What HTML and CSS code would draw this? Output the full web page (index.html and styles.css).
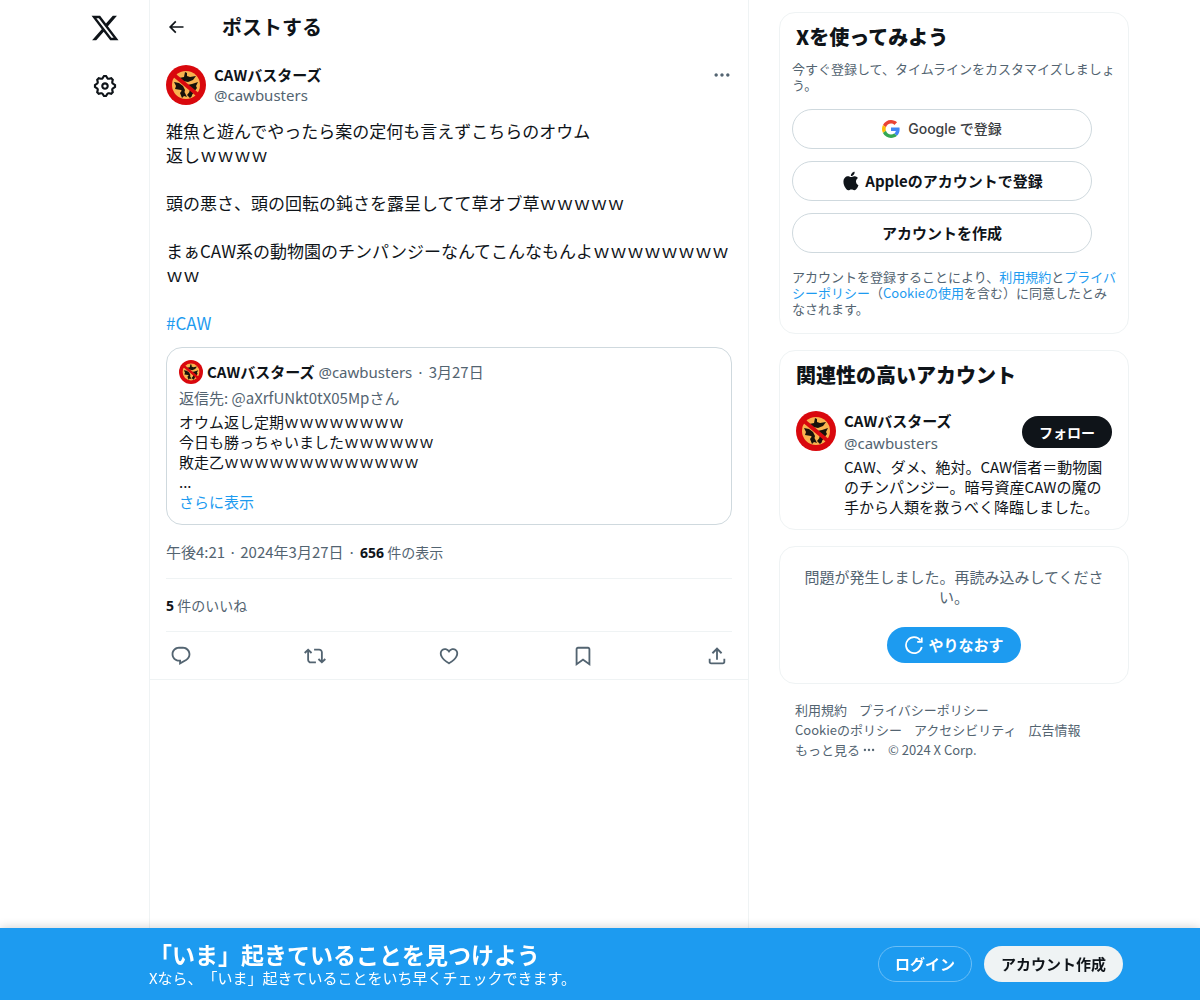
FILE: index.html
```html
<!DOCTYPE html>
<html lang="ja">
<head>
    <meta charset="UTF-8">
    <meta name="viewport" content="width=device-width, initial-scale=1.0">
    <title>XユーザーのCAWバスターズさん</title>
    <link rel="stylesheet" href="styles.css">
</head>
<body>
    <!-- shared avatar artwork -->
    <svg class="sprite" aria-hidden="true">
        <symbol id="avatar" viewBox="0 0 40 40">
            <circle cx="20" cy="20" r="20" fill="#d9080d"/>
            <circle cx="20" cy="20" r="14" fill="#f9b34f"/>
            <path fill="#17120b" d="M19 7l2 1v3l3 1 6-1-3 4-5 2-5-1-4-3 5-1zM8 17l5 1 4 3 2 4-1 4-3-4-6-1 1-3zM32 17l-2 4 1 2-3 4-2 3-3-2 1-4-3-4 5-1zM17 24l2 4 2 4-3-1-2 2-2-5zM25 25l1 6-2 2-3-3z"/>
            <path stroke="#d9080d" stroke-width="4" d="M8 10l24 20"/>
        </symbol>
    </svg>

    <div class="layout">
        <header class="sidebar">
            <a href="#" class="logo" aria-label="X">
                <svg viewBox="0 0 24 24"><path d="M18.244 2.25h3.308l-7.227 8.26 8.502 11.24H16.17l-5.214-6.817L4.99 21.75H1.68l7.73-8.835L1.254 2.25H8.08l4.713 6.231zm-1.161 17.52h1.833L7.084 4.126H5.117z"/></svg>
            </a>
            <a href="#" class="settings" aria-label="設定">
                <svg viewBox="0 0 24 24"><path d="M10.54 1.75h2.92l1.57 2.36c.11.17.32.25.53.21l2.53-.59 2.17 2.17-.58 2.54c-.05.2.04.41.21.53l2.36 1.57v2.92l-2.36 1.57c-.17.12-.26.33-.21.53l.58 2.54-2.17 2.17-2.53-.59c-.21-.04-.42.04-.53.21l-1.57 2.36h-2.92l-1.58-2.36c-.11-.17-.32-.25-.52-.21l-2.54.59-2.17-2.17.58-2.54c.05-.2-.03-.41-.21-.53l-2.35-1.57v-2.92L4.1 8.97c.18-.12.26-.33.21-.53L3.73 5.9 5.9 3.73l2.54.59c.2.04.41-.04.52-.21l1.58-2.36zm1.07 2l-.98 1.47C10.05 6.08 9 6.5 7.99 6.27l-1.46-.34-.6.6.33 1.46c.24 1.01-.18 2.07-1.05 2.64l-1.46.98v.78l1.46.98c.87.57 1.29 1.63 1.05 2.64l-.33 1.46.6.6 1.46-.34c1.01-.23 2.06.19 2.64 1.05l.98 1.47h.78l.97-1.47c.58-.86 1.63-1.28 2.65-1.05l1.45.34.61-.6-.34-1.46c-.23-1.01.18-2.07 1.05-2.64l1.47-.98v-.78l-1.47-.98c-.87-.57-1.28-1.63-1.05-2.64l.34-1.46-.61-.6-1.45.34c-1.02.23-2.07-.19-2.65-1.05l-.97-1.47h-.78zM12 10.5c-.83 0-1.5.67-1.5 1.5s.67 1.5 1.5 1.5c.82 0 1.5-.67 1.5-1.5s-.68-1.5-1.5-1.5zM8.5 12c0-1.93 1.56-3.5 3.5-3.5 1.93 0 3.5 1.57 3.5 3.5s-1.57 3.5-3.5 3.5c-1.94 0-3.5-1.57-3.5-3.5z"/></svg>
            </a>
        </header>

        <main class="main">
            <div class="topbar">
                <button class="icon-btn back" aria-label="戻る">
                    <svg viewBox="0 0 24 24"><path d="M7.414 13l5.043 5.04-1.414 1.42L3.586 12l7.457-7.46 1.414 1.42L7.414 11H21v2H7.414z"/></svg>
                </button>
                <h1>ポストする</h1>
            </div>

            <article class="post">
                <div class="author">
                    <svg class="avatar"><use href="#avatar"/></svg>
                    <div class="author-names">
                        <a href="#" class="name">CAWバスターズ</a>
                        <a href="#" class="handle">@cawbusters</a>
                    </div>
                    <button class="icon-btn more" aria-label="もっと見る">
                        <svg viewBox="0 0 24 24"><path d="M3 12c0-1.1.9-2 2-2s2 .9 2 2-.9 2-2 2-2-.9-2-2zm9 2c1.1 0 2-.9 2-2s-.9-2-2-2-2 .9-2 2 .9 2 2 2zm7 0c1.1 0 2-.9 2-2s-.9-2-2-2-2 .9-2 2 .9 2 2 2z"/></svg>
                    </button>
                </div>

                <div class="post-text">雑魚と遊んでやったら案の定何も言えずこちらのオウム<br>返しｗｗｗｗ<br><br>頭の悪さ、頭の回転の鈍さを露呈してて草オブ草ｗｗｗｗｗ<br><br>まぁCAW系の動物園のチンパンジーなんてこんなもんよｗｗｗｗｗｗｗｗｗｗ<br><br><a href="#">#CAW</a></div>

                <div class="quote">
                    <div class="quote-head">
                        <svg class="avatar-small"><use href="#avatar"/></svg>
                        <span class="name">CAWバスターズ</span>
                        <span class="handle">@cawbusters</span>
                        <span class="date"><span class="dot">·</span>3月27日</span>
                    </div>
                    <div class="reply-to">返信先: @aXrfUNkt0tX05Mpさん</div>
                    <div class="quote-text">オウム返し定期ｗｗｗｗｗｗｗｗ<br>今日も勝っちゃいましたｗｗｗｗｗｗ<br>敗走乙ｗｗｗｗｗｗｗｗｗｗｗｗｗ<br>...</div>
                    <a href="#">さらに表示</a>
                </div>

                <div class="meta">
                    <a href="#">午後4:21 · 2024年3月27日</a><span class="dot">·</span><span class="count"><b>656</b> 件の表示</span>
                </div>
                <div class="likes count"><b>5</b> 件のいいね</div>

                <div class="actions">
                    <button aria-label="返信">
                        <svg viewBox="0 0 24 24"><path d="M1.751 10c0-4.42 3.584-8 8.005-8h4.366c4.49 0 8.129 3.64 8.129 8.13 0 2.96-1.607 5.68-4.196 7.11l-8.054 4.46v-3.69h-.067c-4.49.1-8.183-3.51-8.183-8.01zm8.005-6c-3.317 0-6.005 2.69-6.005 6 0 3.37 2.77 6.08 6.138 6.01l.351-.01h1.761v2.3l5.087-2.81c1.951-1.08 3.163-3.13 3.163-5.36 0-3.39-2.744-6.13-6.129-6.13H9.756z"/></svg>
                    </button>
                    <button aria-label="リポスト">
                        <svg viewBox="0 0 24 24"><path d="M4.5 3.88l4.432 4.14-1.364 1.46L5.5 7.55V16c0 1.1.896 2 2 2H13v2H7.5c-2.209 0-4-1.79-4-4V7.55L1.432 9.48.068 8.02 4.5 3.88zM16.5 6H11V4h5.5c2.209 0 4 1.79 4 4v8.45l2.068-1.93 1.364 1.46-4.432 4.14-4.432-4.14 1.364-1.46 2.068 1.93V8c0-1.1-.896-2-2-2z"/></svg>
                    </button>
                    <button aria-label="いいね">
                        <svg viewBox="0 0 24 24"><path d="M16.697 5.5c-1.222-.06-2.679.51-3.89 2.16l-.805 1.09-.806-1.09C9.984 6.01 8.526 5.44 7.304 5.5c-1.243.07-2.349.78-2.91 1.91-.552 1.12-.633 2.78.479 4.82 1.074 1.97 3.257 4.27 7.129 6.61 3.87-2.34 6.052-4.64 7.126-6.61 1.111-2.04 1.03-3.7.477-4.82-.561-1.13-1.666-1.84-2.908-1.91zm4.187 7.69c-1.351 2.48-4.001 5.12-8.379 7.67l-.503.3-.504-.3c-4.379-2.55-7.029-5.19-8.382-7.67-1.36-2.5-1.41-4.86-.514-6.67.887-1.79 2.647-2.91 4.601-3.01 1.651-.09 3.368.56 4.798 2.01 1.429-1.45 3.146-2.1 4.796-2.01 1.954.1 3.714 1.22 4.601 3.01.896 1.81.846 4.17-.514 6.67z"/></svg>
                    </button>
                    <button aria-label="ブックマーク">
                        <svg viewBox="0 0 24 24"><path d="M4 4.5C4 3.12 5.119 2 6.5 2h11C18.881 2 20 3.12 20 4.5v18.44l-8-5.71-8 5.71V4.5zM6.5 4c-.276 0-.5.22-.5.5v14.56l6-4.29 6 4.29V4.5c0-.28-.224-.5-.5-.5h-11z"/></svg>
                    </button>
                    <button aria-label="共有">
                        <svg viewBox="0 0 24 24"><path d="M12 2.59l5.7 5.7-1.41 1.42L13 6.41V16h-2V6.41l-3.3 3.3-1.41-1.42L12 2.59zM21 15l-.02 3.51c0 1.38-1.12 2.49-2.5 2.49H5.5C4.11 21 3 19.88 3 18.5V15h2v3.5c0 .28.22.5.5.5h12.98c.28 0 .5-.22.5-.5L19 15h2z"/></svg>
                    </button>
                </div>
            </article>
        </main>

        <aside class="side">
            <section class="card signup">
                <h2>Xを使ってみよう</h2>
                <p>今すぐ登録して、タイムラインをカスタマイズしましょう。</p>
                <div class="signup-buttons">
                    <button class="google">
                        <svg viewBox="0 0 48 48">
                            <path fill="#EA4335" d="M24 9.5c3.54 0 6.71 1.22 9.21 3.6l6.85-6.85C35.9 2.38 30.47 0 24 0 14.62 0 6.51 5.38 2.56 13.22l7.98 6.19C12.43 13.72 17.74 9.5 24 9.5z"/>
                            <path fill="#4285F4" d="M46.98 24.55c0-1.57-.15-3.09-.38-4.55H24v9.02h12.94c-.58 2.96-2.26 5.48-4.78 7.18l7.73 6c4.51-4.18 7.09-10.36 7.09-17.65z"/>
                            <path fill="#FBBC05" d="M10.53 28.59c-.48-1.45-.76-2.99-.76-4.59s.27-3.14.76-4.59l-7.98-6.19C.92 16.46 0 20.12 0 24c0 3.88.92 7.54 2.56 10.78l7.97-6.19z"/>
                            <path fill="#34A853" d="M24 48c6.48 0 11.93-2.13 15.89-5.81l-7.73-6c-2.15 1.45-4.92 2.3-8.16 2.3-6.26 0-11.57-4.22-13.47-9.91l-7.98 6.19C6.51 42.62 14.62 48 24 48z"/>
                        </svg>
                        Google で登録
                    </button>
                    <button class="apple">
                        <svg viewBox="0 0 24 24"><path d="M16.365 1.43c0 1.14-.493 2.27-1.177 3.08-.744.9-1.99 1.57-2.987 1.57-.12 0-.23-.02-.3-.03-.01-.06-.04-.22-.04-.39 0-1.15.572-2.27 1.206-2.98.804-.94 2.142-1.64 3.248-1.68.03.13.05.28.05.43zm4.565 15.71c-.03.07-.463 1.58-1.518 3.12-.945 1.34-1.94 2.71-3.43 2.71-1.517 0-1.9-.88-3.63-.88-1.698 0-2.302.91-3.67.91-1.377 0-2.332-1.26-3.428-2.8-1.287-1.82-2.323-4.63-2.323-7.28 0-4.28 2.797-6.55 5.552-6.55 1.448 0 2.675.95 3.6.95.865 0 2.222-1.01 3.902-1.01.613 0 2.886.06 4.374 2.19-.13.09-2.383 1.37-2.383 4.19 0 3.26 2.854 4.42 2.955 4.45z"/></svg>
                        Appleのアカウントで登録
                    </button>
                    <button>アカウントを作成</button>
                </div>
                <p>アカウントを登録することにより、<a href="#">利用規約</a>と<a href="#">プライバシーポリシー</a>（<a href="#">Cookieの使用</a>を含む）に同意したとみなされます。</p>
            </section>

            <section class="card">
                <h2>関連性の高いアカウント</h2>
                <div class="user">
                    <svg class="avatar"><use href="#avatar"/></svg>
                    <div class="user-body">
                        <div class="user-head">
                            <div class="user-names">
                                <a href="#" class="name">CAWバスターズ</a>
                                <a href="#" class="handle">@cawbusters</a>
                            </div>
                            <button class="follow">フォロー</button>
                        </div>
                        <div class="bio">CAW、ダメ、絶対。CAW信者＝動物園のチンパンジー。暗号資産CAWの魔の手から人類を救うべく降臨しました。</div>
                    </div>
                </div>
            </section>

            <section class="card error">
                <p>問題が発生しました。再読み込みしてください。</p>
                <button class="retry">
                    <svg viewBox="0 0 20 20"><path d="M16.500 5.500A8 8 0 1 0 17.800 12M17.800 2.500v4.300h-4.600" fill="none" stroke="currentColor" stroke-width="1.700"/></svg>
                    やりなおす
                </button>
            </section>

            <nav class="links">
                <a href="#">利用規約</a>
                <a href="#">プライバシーポリシー</a>
                <a href="#">Cookieのポリシー</a>
                <a href="#">アクセシビリティ</a>
                <a href="#">広告情報</a>
                <a href="#" class="links-more">もっと見る
                    <svg viewBox="0 0 24 24"><path d="M3 12c0-1.1.9-2 2-2s2 .9 2 2-.9 2-2 2-2-.9-2-2zm9 2c1.1 0 2-.9 2-2s-.9-2-2-2-2 .9-2 2 .9 2 2 2zm7 0c1.1 0 2-.9 2-2s-.9-2-2-2-2 .9-2 2 .9 2 2 2z"/></svg>
                </a>
                <span>© 2024 X Corp.</span>
            </nav>
        </aside>
    </div>

    <div class="banner">
        <div class="banner-inner">
            <div class="banner-text">
                <div class="banner-title">「いま」起きていることを見つけよう</div>
                <div>Xなら、「いま」起きていることをいち早くチェックできます。</div>
            </div>
            <div class="banner-buttons">
                <button class="login">ログイン</button>
                <button class="create">アカウント作成</button>
            </div>
        </div>
    </div>
</body>
</html>
```
FILE: styles.css
```css
* {
    box-sizing: border-box;
}
body {
    margin: 0;
    background-color: #fff;
    color: #0f1419;
    font-family: "Noto Sans CJK JP", sans-serif;
    font-size: 15px;
    line-height: 20px;
    text-spacing-trim: space-all;
}
a {
    color: #1d9bf0;
    text-decoration: none;
}
a:hover {
    text-decoration: underline;
}
h1, h2, p {
    margin: 0;
}
h1, h2 {
    font-size: 20px;
    line-height: 24px;
}
h2 {
    font-weight: 900;
    padding: 12px 16px;
}
button {
    display: flex;
    align-items: center;
    justify-content: center;
    padding: 0 16px;
    border: 1px solid transparent;
    border-radius: 20px;
    background: none;
    color: inherit;
    font-family: inherit;
    font-size: 15px;
    font-weight: bold;
    line-height: 20px;
    cursor: pointer;
}
svg {
    display: block;
    flex: none;
    fill: currentColor;
}
.sprite {
    display: none;
}
.layout {
    display: flex;
    max-width: 1058px;
    min-height: 100vh;
    margin: 0 auto;
}

/* left column */
.sidebar {
    flex: none;
    display: flex;
    flex-direction: column;
    align-items: center;
    gap: 30px;
    width: 78px;
    padding: 13px 10px 0 0;
}
.sidebar a {
    color: #0f1419;
}
.logo svg {
    width: 30px;
    height: 30px;
}
.settings svg {
    width: 26px;
    height: 26px;
}

/* post column */
.main {
    flex: 0 1 600px;
    border-left: 1px solid #eff3f4;
    border-right: 1px solid #eff3f4;
}
.topbar {
    display: flex;
    align-items: center;
    gap: 36px;
    height: 53px;
    padding: 0 16px;
}
.icon-btn {
    padding: 0;
    border: 0;
}
.icon-btn svg {
    width: 20px;
    height: 20px;
}
.more {
    color: #536471;
}
.post {
    padding: 12px 16px 0;
    border-bottom: 1px solid #eff3f4;
}
.author {
    display: flex;
    align-items: flex-start;
    gap: 8px;
    margin-bottom: 14px;
}
.avatar {
    width: 40px;
    height: 40px;
}
.author-names,
.user-names {
    display: flex;
    flex: 1;
    flex-direction: column;
}
.name {
    color: #0f1419;
    font-weight: bold;
}
.handle {
    color: #536471;
    font-family: "Noto Sans", "Noto Sans CJK JP", sans-serif;
}
.post-text {
    font-size: 17px;
    line-height: 24px;
    word-break: break-all;
}
.quote {
    margin-top: 12px;
    padding: 12px;
    border: 1px solid #cfd9de;
    border-radius: 16px;
}
.quote-head {
    display: flex;
    align-items: center;
    gap: 4px;
}
.avatar-small {
    width: 24px;
    height: 24px;
}
.date,
.reply-to {
    color: #536471;
}
.reply-to {
    margin: 4px 0;
}
.dot {
    padding: 0 4px;
}
.date .dot {
    padding-left: 0;
}
.meta {
    padding: 17px 0 16px;
    border-bottom: 1px solid #eff3f4;
    color: #536471;
}
.meta a {
    color: #536471;
}
.count {
    color: #536471;
    font-size: 14px;
}
.count b {
    color: #0f1419;
    font-family: "Noto Sans", sans-serif;
    line-height: 16px;
}
.meta .count {
    line-height: 16px;
}
.likes {
    padding: 16px 0;
    border-bottom: 1px solid #eff3f4;
}
.actions {
    display: flex;
    justify-content: space-between;
    height: 47px;
    color: #536471;
}
.actions button {
    width: 30px;
    padding: 0;
}
.actions svg {
    width: 22px;
    height: 22px;
}

/* right column */
.side {
    flex: 0 1 350px;
    margin: 12px 0 88px 30px;
}
.card {
    margin-bottom: 16px;
    border: 1px solid #eff3f4;
    border-radius: 16px;
}
.signup {
    padding: 0 12px 16px;
    color: #536471;
    font-size: 13px;
    line-height: 16px;
}
.signup h2 {
    padding: 12px 4px;
    color: #0f1419;
}
.signup-buttons {
    display: flex;
    flex-direction: column;
    gap: 12px;
    max-width: 300px;
    margin: 16px 0;
}
.signup-buttons button {
    height: 40px;
    border-color: #cfd9de;
    color: #0f1419;
}
.signup-buttons .google {
    gap: 8px;
    color: #3c4043;
    font-family: Inter, "Noto Sans CJK JP", sans-serif;
    font-size: 14px;
    font-weight: 500;
}
.google svg {
    width: 18px;
    height: 18px;
}
.signup-buttons .apple {
    gap: 4px;
}
.apple svg {
    width: 20px;
    height: 20px;
}
.user {
    display: flex;
    gap: 8px;
    padding: 12px 16px;
}
.user-body {
    flex: 1;
}
.user-head {
    display: flex;
    align-items: center;
}
.user-names {
    gap: 2px;
}
.follow {
    height: 32px;
    background-color: #0f1419;
    color: #fff;
    font-size: 14px;
}
.bio {
    margin-top: 4px;
}
.error {
    display: flex;
    flex-direction: column;
    align-items: center;
    gap: 20px;
    padding: 20px;
    color: #536471;
    text-align: center;
}
.retry {
    gap: 4px;
    height: 36px;
    background-color: #1d9bf0;
    color: #fff;
}
.retry svg {
    width: 20px;
    height: 20px;
}
.links {
    display: flex;
    flex-wrap: wrap;
    padding: 0 16px;
    color: #536471;
    font-size: 13px;
}
.links a {
    padding-right: 12px;
    color: #536471;
}
.links-more {
    display: flex;
    align-items: center;
    gap: 2px;
}
.links-more svg {
    width: 14px;
    height: 14px;
}

/* login banner */
.banner {
    position: fixed;
    right: 0;
    bottom: 0;
    left: 0;
    background-color: #1d9bf0;
    box-shadow: 0 0 10px rgba(0, 0, 0, 0.2);
    color: #fff;
}
.banner-inner {
    display: flex;
    align-items: center;
    justify-content: space-between;
    max-width: 1058px;
    margin: 0 auto;
    padding: 12px 6px 12px 78px;
}
.banner-title {
    font-size: 23px;
    font-weight: bold;
    line-height: 28px;
}
.banner-buttons {
    display: flex;
    gap: 12px;
}
.banner-buttons button {
    height: 36px;
}
.banner-buttons .login {
    border-color: #6bbef6;
}
.banner-buttons .create {
    background-color: #eff3f4;
    color: #0f1419;
}
```
